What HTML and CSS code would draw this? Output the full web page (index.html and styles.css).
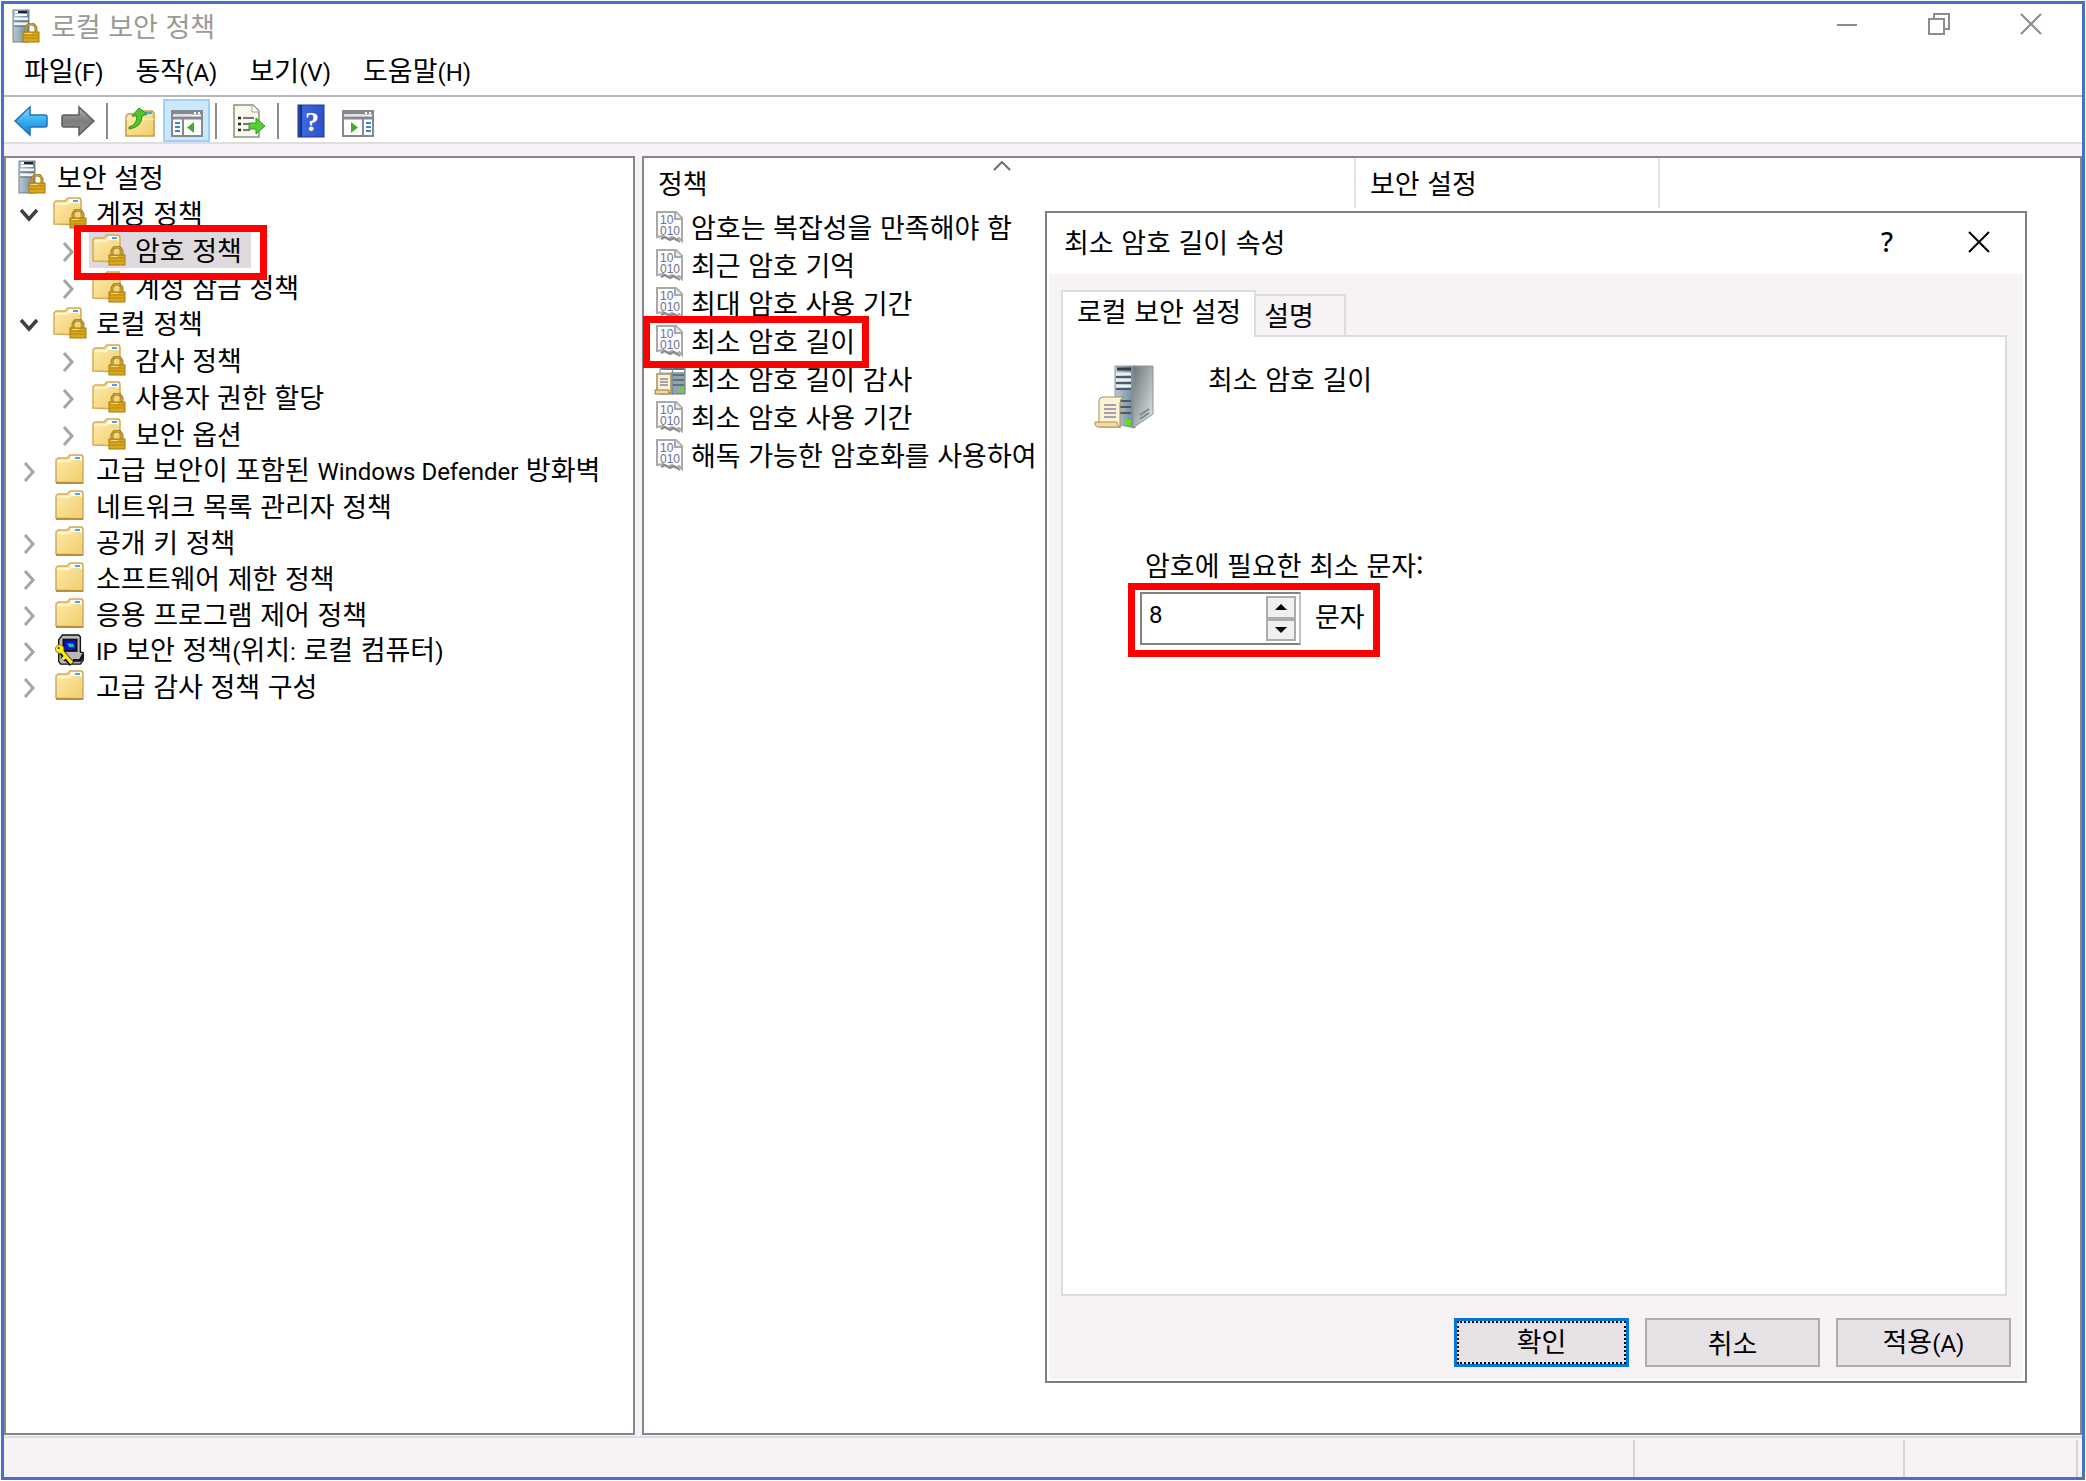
FILE: index.html
```html
<!DOCTYPE html>
<html lang="ko">
<head>
  <meta charset="UTF-8">
  <meta name="viewport" content="width=device-width, initial-scale=1.0">
  <title>로컬 보안 정책</title>
  <link rel="stylesheet" href="styles.css">
</head>
<body>

<!-- Iconos compartidos -->
<svg class="sprite" aria-hidden="true">
  <defs>
    <linearGradient id="gFolder" x1="0" y1="0" x2="1" y2="1">
      <stop offset="0" stop-color="#ffecae"/><stop offset="1" stop-color="#f0cd6c"/>
    </linearGradient>
    <linearGradient id="gServer" x1="0" y1="0" x2="1" y2="0">
      <stop offset="0" stop-color="#b9cbd4"/><stop offset="1" stop-color="#6f8592"/>
    </linearGradient>
    <linearGradient id="gSide" x1="0" y1="0" x2="1" y2="1">
      <stop offset="0" stop-color="#6d7579"/><stop offset="1" stop-color="#e2e8ea"/>
    </linearGradient>
    <linearGradient id="gBlue" x1="0" y1="0" x2="0" y2="1">
      <stop offset="0" stop-color="#8fdcff"/><stop offset="0.5" stop-color="#35aef2"/><stop offset="1" stop-color="#1583cf"/>
    </linearGradient>
    <linearGradient id="gGray" x1="0" y1="0" x2="0" y2="1">
      <stop offset="0" stop-color="#b5b5b5"/><stop offset="0.5" stop-color="#7d7d7d"/><stop offset="1" stop-color="#8f8f8f"/>
    </linearGradient>
    <linearGradient id="gHelp" x1="0" y1="0" x2="1" y2="0">
      <stop offset="0" stop-color="#1c3fae"/><stop offset="0.2" stop-color="#3f66dd"/><stop offset="1" stop-color="#2c50c8"/>
    </linearGradient>
  </defs>

  <symbol id="lock" viewBox="0 0 18 20">
    <path d="M4 10V6a5 5 0 0 1 10 0v4" fill="none" stroke="#a07a1e" stroke-width="3"/>
    <path d="M4 10V6a5 5 0 0 1 10 0v4" fill="none" stroke="#d8b453" stroke-width="1"/>
    <rect x="1" y="9" width="16" height="10" fill="#d9a81e" stroke="#a37a10"/>
    <path d="M2 12h14M2 15h14" stroke="#b5860f"/>
    <path d="M3 10.500h7" stroke="#f7d970"/>
  </symbol>

  <symbol id="folder" viewBox="0 0 34 32">
    <path d="M3 28V6l2-2h9l3-3h12l1 2v26z" fill="url(#gFolder)" stroke="#d6ab55" stroke-width="1.500"/>
    <path d="M4 7h12l3-3h9v3" fill="none" stroke="#fff5cf" stroke-width="2"/>
    <rect x="18" y="2" width="10" height="4" fill="#fff"/>
    <rect x="22" y="3" width="5" height="2" fill="#4ba3e8"/>
    <path d="M3 29h27" stroke="#b98f3c" stroke-width="2"/>
  </symbol>

  <symbol id="folder-lock" viewBox="0 0 34 32">
    <path d="M1 27V6l2-2h9l3-3h12l1 2v25z" fill="url(#gFolder)" stroke="#d6ab55" stroke-width="1.500"/>
    <path d="M2 7h12l3-3h9v3" fill="none" stroke="#fff5cf" stroke-width="2"/>
    <rect x="16" y="2" width="10" height="4" fill="#fff"/>
    <rect x="20" y="3" width="5" height="2" fill="#4ba3e8"/>
    <use href="#lock" x="16" y="12" width="18" height="20"/>
  </symbol>

  <symbol id="server-lock" viewBox="0 0 28 34">
    <rect x="1" y="1" width="16" height="32" fill="url(#gServer)" stroke="#71838d"/>
    <path d="M3 3h12M3 6h12" stroke="#fff" stroke-width="2"/>
    <path d="M6 3h9" stroke="#223" stroke-width="2"/>
    <path d="M2 10h14M2 15h14" stroke="#eef5f8" stroke-width="3"/>
    <path d="M2 12h14M2 17h14" stroke="#52636d"/>
    <use href="#lock" x="10" y="14" width="18" height="20"/>
  </symbol>

  <symbol id="policy" viewBox="0 0 28 32">
    <path d="M1 1h19l6 6v23l-3-3-3 2-4-3-4 2-5-3-6 1z" fill="#fdfdfd" stroke="#a9a9a9" stroke-width="2"/>
    <path d="M5 28l4-2 5 3 4-2 6 4" fill="none" stroke="#8a8a8a" stroke-width="2"/>
    <path d="M19 1v7h7" fill="#eee" stroke="#a9a9a9" stroke-width="2"/>
    <text x="4" y="13" class="bits">10</text>
    <text x="4" y="24" class="bits">010</text>
  </symbol>

  <symbol id="server-scroll" viewBox="0 0 60 64">
    <path d="M21 1h20v62l-20-4z" fill="url(#gServer)" stroke="#8d9ba3"/>
    <path d="M39 1h20v48L39 63z" fill="url(#gSide)" stroke="#8a9499"/>
    <path d="M23 4h14" stroke="#333c42" stroke-width="3"/>
    <path d="M22 9h15M22 15h15M22 21h15" stroke="#e7eff3" stroke-width="3"/>
    <path d="M22 12h15M22 18h15M22 24h15M22 36h15M22 42h15M22 48h15" stroke="#4c5a63" stroke-width="2"/>
    <path d="M46 50l9-6M46 54l9-6" stroke="#7f898e" stroke-width="2"/>
    <rect x="32" y="55" width="5" height="5" fill="#65dc1e"/>
    <path d="M5 36q0-4 4-4h21q-4 1-4 6v24H5z" fill="#fdf3d3" stroke="#a8915a"/>
    <path d="M1 57h22q0 5 4 5H5q-5 0-4-5z" fill="#f2dca0" stroke="#a8915a"/>
    <path d="M10 40h12M10 44h12M10 48h12M10 52h12" stroke="#8784a6" stroke-width="1.500"/>
  </symbol>

  <symbol id="server-mini" viewBox="0 0 32 32">
    <rect x="6" y="1" width="13" height="30" fill="#c3d3da" stroke="#7d8f99"/>
    <rect x="18" y="1" width="13" height="30" fill="#8fa4b0" stroke="#64767f"/>
    <path d="M7 4h11M7 8h11M19 4h11M19 8h11" stroke="#fff" stroke-width="2"/>
    <path d="M7 6h11M19 6h11M19 12h11M19 17h11M19 22h11" stroke="#50616b" stroke-width="1.500"/>
    <rect x="25" y="24" width="5" height="5" fill="#65dc1e"/>
    <path d="M3 11h14v19H3z" fill="#fdf3d3" stroke="#a8915a" stroke-width="1.500"/>
    <path d="M1 27h14v4H1z" fill="#f0d898" stroke="#8f7a45"/>
    <path d="M6 16h8M6 19h8M6 22h8" stroke="#8784a6" stroke-width="1.500"/>
  </symbol>

  <symbol id="ipsec" viewBox="0 0 34 34">
    <path d="M9 1h17l2 2v16l3 1v8l-3 4H7l-2-3V6z" fill="#b8b8b8" stroke="#111" stroke-width="1.500"/>
    <rect x="10" y="6" width="14" height="12" fill="#0a10d8" stroke="#111" stroke-width="2"/>
    <path d="M14 10h6l2 4h-6z" fill="#2bb4a8"/>
    <path d="M20 28h8l3-6" fill="none" stroke="#111" stroke-width="3"/>
    <path d="M8 19l11 13M12 24l-3 3" stroke="#111" stroke-width="6"/>
    <circle cx="6" cy="16" r="4.500" fill="#ffee11" stroke="#8a8000"/>
    <path d="M7 17l12 14M12 24l-3 3" stroke="#ffee11" stroke-width="3.500"/>
    <circle cx="5" cy="15" r="1.200" fill="#333"/>
  </symbol>

  <symbol id="open" viewBox="0 0 20 20">
    <path d="M2 5l8 9 8-9" fill="none" stroke="#404040" stroke-width="3.500"/>
  </symbol>
  <symbol id="closed" viewBox="0 0 20 20">
    <path d="M6 1l8 9-8 9" fill="none" stroke="#a6a6a6" stroke-width="3"/>
  </symbol>
</svg>

<main class="window">
  <header class="titlebar">
    <svg class="icon-server"><use href="#server-lock"/></svg>
    <h1>로컬 보안 정책</h1>
    <div class="controls">
      <button type="button" aria-label="최소화"><svg width="22" height="22" viewBox="0 0 22 22"><path d="M1 12h20"/></svg></button>
      <button type="button" aria-label="이전 크기로"><svg width="22" height="22" viewBox="0 0 22 22"><path d="M1 6h15v15H1zM6 6V1h15v15h-5"/></svg></button>
      <button type="button" aria-label="닫기"><svg width="22" height="22" viewBox="0 0 22 22"><path d="M1 1l20 20M21 1L1 21"/></svg></button>
    </div>
  </header>

  <nav class="menu">
    <a href="#">파일<span class="latin">(F)</span></a>
    <a href="#">동작<span class="latin">(A)</span></a>
    <a href="#">보기<span class="latin">(V)</span></a>
    <a href="#">도움말<span class="latin">(H)</span></a>
  </nav>

  <div class="toolbar">
    <button type="button" aria-label="뒤로">
      <svg width="34" height="34" viewBox="0 0 34 34"><path d="M1 17L16 3v8h15q2 0 2 2v8q0 2-2 2H16v8z" fill="url(#gBlue)" stroke="#2272b4" stroke-width="1.500"/></svg>
    </button>
    <button type="button" aria-label="앞으로">
      <svg width="34" height="34" viewBox="0 0 34 34"><path d="M33 17L18 3v8H3q-2 0-2 2v8q0 2 2 2h15v8z" fill="url(#gGray)" stroke="#5c5c5c" stroke-width="1.500"/></svg>
    </button>
    <span class="separator"></span>
    <button type="button" aria-label="한 수준 위로">
      <svg width="34" height="34" viewBox="0 0 34 34">
        <path d="M3 32V12l2-2h8l3-3h13l2 2v23z" fill="url(#gFolder)" stroke="#c99d45" stroke-width="1.500"/>
        <path d="M22 9h7" stroke="#4ba3e8" stroke-width="2"/>
        <path d="M3 15h28" stroke="#fff3c4"/>
        <path d="M6 23q8-2 8-11h-5l7-8 8 6-5 2q0 11-13 13z" fill="#4fc62c" stroke="#2f8f1c"/>
      </svg>
    </button>
    <button type="button" class="active" aria-label="콘솔 트리 표시/숨기기">
      <svg width="34" height="34" viewBox="0 0 34 34">
        <rect x="2" y="7" width="30" height="25" fill="#fff" stroke="#85898f" stroke-width="2"/>
        <path d="M2 9h30M2 14h30" stroke="#85898f" stroke-width="3"/>
        <path d="M4 11h18" stroke="#dfe3e8" stroke-width="2"/><path d="M24 9h2M28 9h2" stroke="#fff" stroke-width="2"/>
        <path d="M13 15v17" stroke="#85898f" stroke-width="2"/>
        <path d="M5 19h5M5 23h5M5 27h5" stroke="#3b83d0" stroke-width="2"/>
        <path d="M24 18v11l-7-5.500z" fill="#3fae29"/>
      </svg>
    </button>
    <span class="separator"></span>
    <button type="button" aria-label="목록 내보내기">
      <svg width="34" height="34" viewBox="0 0 34 34">
        <path d="M2 1h19l6 6v26H2z" fill="#fdf9ea" stroke="#8f8f88" stroke-width="1.500"/>
        <path d="M20 1v7h7" fill="#fff" stroke="#a0a09a"/>
        <path d="M6 14h3M6 20h3M6 26h3" stroke="#222" stroke-width="2.500"/>
        <path d="M11 14h11M11 20h7M11 26h7" stroke="#77728f" stroke-width="2"/>
        <path d="M17 19h7v-5l9 8-9 8v-5h-7z" fill="#55cf33" stroke="#349a1e"/>
      </svg>
    </button>
    <span class="separator"></span>
    <button type="button" aria-label="도움말">
      <svg width="34" height="34" viewBox="0 0 34 34">
        <rect x="4" y="1" width="26" height="32" fill="url(#gHelp)" stroke="#20389a"/>
        <path d="M7 1v32" stroke="#16308f" stroke-width="2"/>
        <text x="11" y="27" class="help-mark">?</text>
      </svg>
    </button>
    <button type="button" aria-label="작업 창 표시/숨기기">
      <svg width="34" height="34" viewBox="0 0 34 34">
        <rect x="2" y="7" width="30" height="25" fill="#fff" stroke="#85898f" stroke-width="2"/>
        <path d="M2 9h30M2 14h30" stroke="#85898f" stroke-width="3"/>
        <path d="M4 11h18" stroke="#dfe3e8" stroke-width="2"/><path d="M24 9h2M28 9h2" stroke="#fff" stroke-width="2"/>
        <path d="M22 15v17" stroke="#85898f" stroke-width="2"/>
        <path d="M25 19h5M25 23h5M25 27h5" stroke="#3b83d0" stroke-width="2"/>
        <path d="M10 18v11l7-5.500z" fill="#3fae29"/>
      </svg>
    </button>
  </div>

  <div class="panes">
    <!-- Árbol de directivas -->
    <nav class="pane tree">
      <a class="root" href="#"><svg class="icon-server"><use href="#server-lock"/></svg>보안 설정</a>
      <ul>
        <li>
          <div class="row"><svg class="twisty"><use href="#open"/></svg><a href="#"><svg class="icon"><use href="#folder-lock"/></svg>계정 정책</a></div>
          <ul>
            <li class="row"><svg class="twisty"><use href="#closed"/></svg><a class="selected" href="#"><svg class="icon"><use href="#folder-lock"/></svg>암호 정책<span class="mark mark-tree"></span></a></li>
            <li class="row"><svg class="twisty"><use href="#closed"/></svg><a href="#"><svg class="icon"><use href="#folder-lock"/></svg>계정 잠금 정책</a></li>
          </ul>
        </li>
        <li>
          <div class="row"><svg class="twisty"><use href="#open"/></svg><a href="#"><svg class="icon"><use href="#folder-lock"/></svg>로컬 정책</a></div>
          <ul>
            <li class="row"><svg class="twisty"><use href="#closed"/></svg><a href="#"><svg class="icon"><use href="#folder-lock"/></svg>감사 정책</a></li>
            <li class="row"><svg class="twisty"><use href="#closed"/></svg><a href="#"><svg class="icon"><use href="#folder-lock"/></svg>사용자 권한 할당</a></li>
            <li class="row"><svg class="twisty"><use href="#closed"/></svg><a href="#"><svg class="icon"><use href="#folder-lock"/></svg>보안 옵션</a></li>
          </ul>
        </li>
        <li class="row"><svg class="twisty"><use href="#closed"/></svg><a href="#"><svg class="icon"><use href="#folder"/></svg><span>고급 보안이 포함된 <span class="latin">Windows Defender</span> 방화벽</span></a></li>
        <li class="row"><svg class="twisty"></svg><a href="#"><svg class="icon"><use href="#folder"/></svg>네트워크 목록 관리자 정책</a></li>
        <li class="row"><svg class="twisty"><use href="#closed"/></svg><a href="#"><svg class="icon"><use href="#folder"/></svg>공개 키 정책</a></li>
        <li class="row"><svg class="twisty"><use href="#closed"/></svg><a href="#"><svg class="icon"><use href="#folder"/></svg>소프트웨어 제한 정책</a></li>
        <li class="row"><svg class="twisty"><use href="#closed"/></svg><a href="#"><svg class="icon"><use href="#folder"/></svg>응용 프로그램 제어 정책</a></li>
        <li class="row"><svg class="twisty"><use href="#closed"/></svg><a href="#"><svg class="icon"><use href="#ipsec"/></svg><span><span class="latin">IP</span> 보안 정책<span class="latin">(</span>위치<span class="latin">:</span> 로컬 컴퓨터<span class="latin">)</span></span></a></li>
        <li class="row"><svg class="twisty"><use href="#closed"/></svg><a href="#"><svg class="icon"><use href="#folder"/></svg>고급 감사 정책 구성</a></li>
      </ul>
    </nav>

    <!-- Lista de directivas -->
    <section class="pane policies">
      <table>
        <thead>
          <tr>
            <th class="col-policy">정책<svg class="sort" width="18" height="10" viewBox="0 0 18 10"><path d="M1 9l8-8 8 8" fill="none" stroke="#6d6d6d" stroke-width="2"/></svg></th>
            <th class="col-setting">보안 설정</th>
            <th></th>
          </tr>
        </thead>
        <tbody>
          <tr><td><a href="#"><svg class="icon"><use href="#policy"/></svg>암호는 복잡성을 만족해야 함</a></td><td></td><td></td></tr>
          <tr><td><a href="#"><svg class="icon"><use href="#policy"/></svg>최근 암호 기억</a></td><td></td><td></td></tr>
          <tr><td><a href="#"><svg class="icon"><use href="#policy"/></svg>최대 암호 사용 기간</a></td><td></td><td></td></tr>
          <tr><td><a href="#"><svg class="icon"><use href="#policy"/></svg>최소 암호 길이<span class="mark mark-list"></span></a></td><td></td><td></td></tr>
          <tr><td><a href="#"><svg class="icon"><use href="#server-mini"/></svg>최소 암호 길이 감사</a></td><td></td><td></td></tr>
          <tr><td><a href="#"><svg class="icon"><use href="#policy"/></svg>최소 암호 사용 기간</a></td><td></td><td></td></tr>
          <tr><td><a href="#"><svg class="icon"><use href="#policy"/></svg>해독 가능한 암호화를 사용하여 암호 저장</a></td><td></td><td></td></tr>
        </tbody>
      </table>

      <form class="dialog" role="dialog" aria-labelledby="dialogTitle">
        <header class="dialog-title">
          <h2 id="dialogTitle">최소 암호 길이 속성</h2>
          <button type="button" class="help" aria-label="도움말">?</button>
          <button type="button" aria-label="닫기"><svg width="22" height="22" viewBox="0 0 22 22"><path d="M1 1l20 20M21 1L1 21"/></svg></button>
        </header>
        <div class="dialog-body">
          <div class="tabs">
            <button type="button" class="tab current">로컬 보안 설정</button>
            <button type="button" class="tab">설명</button>
          </div>
          <div class="panel">
            <div class="policy-name">
              <svg class="icon-large"><use href="#server-scroll"/></svg>
              <span>최소 암호 길이</span>
            </div>
            <label for="minLength">암호에 필요한 최소 문자:</label>
            <div class="field">
              <div class="spinner">
                <input type="text" id="minLength" name="minLength" value="8">
                <div class="arrows">
                  <button type="button" aria-label="늘리기"><svg width="12" height="6" viewBox="0 0 12 6"><path d="M0 6l6-6 6 6z"/></svg></button>
                  <button type="button" aria-label="줄이기"><svg width="12" height="6" viewBox="0 0 12 6"><path d="M0 0l6 6 6-6z"/></svg></button>
                </div>
              </div>
              <span class="unit">문자</span>
            </div>
          </div>
          <div class="actions">
            <button type="submit" class="default"><span>확인</span></button>
            <button type="button">취소</button>
            <button type="button">적용<span class="latin">(A)</span></button>
          </div>
        </div>
      </form>
    </section>
  </div>

  <footer class="statusbar"><span></span><span></span><span></span></footer>
</main>

</body>
</html>
```
FILE: styles.css
```css
* {
  box-sizing: border-box;
}
body {
  margin: 0;
  padding: 1px;
  height: 100vh;
  background: #fff;
  color: #000;
  font-family: "Noto Sans CJK KR", sans-serif;
  font-size: 27px;
  line-height: 36px;
}
button,
input {
  font: inherit;
  color: inherit;
  padding: 0;
}
button {
  border: none;
  background: none;
}
a {
  color: inherit;
  text-decoration: none;
}
ul {
  list-style: none;
  margin: 0;
  padding: 0;
}
svg {
  display: block;
  flex: none;
}
.sprite {
  position: absolute;
  width: 0;
  height: 0;
  visibility: hidden;
}
.latin {
  font-family: Roboto, sans-serif;
  font-size: 24px;
}
.bits {
  font-family: "Liberation Sans", sans-serif;
  font-size: 12px;
  fill: #6f6f95;
}
.help-mark {
  font-family: "Liberation Serif", serif;
  font-size: 28px;
  font-weight: bold;
  fill: #fff;
}
.window {
  display: flex;
  flex-direction: column;
  height: 100%;
  border: 3px solid #4472c4;
  background: #fff;
}

/* Barra de título */
.titlebar {
  display: flex;
  align-items: center;
  height: 44px;
  padding-left: 8px;
}
.titlebar h1 {
  flex: 1;
  margin: 0 0 0 11px;
  font-size: 27px;
  font-weight: normal;
  color: #999;
}
.icon-server {
  width: 28px;
  height: 34px;
}
.controls {
  display: flex;
  padding: 0 5px 4px 0;
}
.controls button {
  display: flex;
  justify-content: center;
  width: 92px;
}
.controls path {
  fill: none;
  stroke: #8c8c8c;
  stroke-width: 2;
}

/* Menú y herramientas */
.menu {
  display: flex;
  gap: 32px;
  height: 49px;
  padding: 4px 20px;
  border-bottom: 2px solid #b8b8b8;
}
.toolbar {
  display: flex;
  align-items: center;
  height: 47px;
  padding: 2px 0 0 3px;
  border-bottom: 2px solid #dedede;
}
.toolbar button {
  display: flex;
  align-items: center;
  justify-content: center;
  width: 47px;
  height: 43px;
}
.toolbar .active {
  background: #cce8ff;
  border: 2px solid #99d1ff;
}
.separator {
  width: 2px;
  height: 36px;
  margin: 0 8px 0 5px;
  background: #8c8c8c;
}

/* Paneles */
.panes {
  flex: 1;
  display: grid;
  grid-template-columns: 631px 1fr;
  gap: 7px;
  min-height: 0;
  padding: 12px 0 1px;
  background: #f6f2f6;
}
.pane {
  border: 2px solid #828790;
  background: #fff;
}
.tree {
  padding-left: 10px;
}
.tree a {
  display: flex;
  align-items: center;
  gap: 9px;
  height: 36px;
  padding: 0 9px 0 3px;
  white-space: nowrap;
}
.tree .root {
  gap: 11px;
  height: 37px;
  padding-left: 2px;
}
.row {
  display: flex;
  align-items: center;
  gap: 8px;
  height: 36px;
}
.tree ul ul {
  padding-left: 39px;
}
.tree ul ul .row {
  height: 37px;
}
.twisty {
  width: 26px;
  height: 20px;
  margin-top: 4px;
}
.icon {
  width: 34px;
  height: 32px;
}
.tree .selected {
  position: relative;
  background: #dedade;
}

/* Recuadros rojos */
.mark {
  position: absolute;
  z-index: 1;
  border: 7px solid #f00;
  pointer-events: none;
}
.mark-tree {
  inset: -7px -16px -12px -15px;
}
.mark-list {
  inset: -6px -14px -8px -10px;
}

/* Tabla */
.policies {
  position: relative;
}
table {
  width: 100%;
  table-layout: fixed;
  border-collapse: collapse;
}
th {
  position: relative;
  height: 50px;
  padding: 0 14px;
  border-right: 2px solid #e5e5e5;
  font-weight: normal;
  text-align: left;
}
th:last-child {
  border: none;
}
.col-policy {
  width: 711px;
}
.col-setting {
  width: 304px;
}
.sort {
  position: absolute;
  top: 3px;
  left: 349px;
}
td {
  height: 38px;
  padding: 0 0 0 9px;
}
td a {
  position: relative;
  display: flex;
  align-items: center;
  gap: 4px;
  width: max-content;
  height: 38px;
}

/* Cuadro de propiedades */
.dialog {
  position: absolute;
  top: 53px;
  right: 53px;
  bottom: 50px;
  left: 401px;
  display: flex;
  flex-direction: column;
  border: 2px solid #7f7f7f;
  background: #fff;
}
.dialog-title {
  display: flex;
  align-items: center;
  height: 61px;
  padding: 0 0 4px 17px;
}
.dialog-title h2 {
  flex: 1;
  margin: 0;
  font-size: 27px;
  font-weight: normal;
}
.dialog-title button {
  display: flex;
  justify-content: center;
  width: 92px;
}
.dialog-title .help {
  font-family: "Noto Sans", sans-serif;
  font-weight: 500;
}
.dialog-title path {
  fill: none;
  stroke: #000;
  stroke-width: 2;
}
.dialog-body {
  flex: 1;
  display: flex;
  flex-direction: column;
  margin: 0 2px 2px;
  padding: 16px 12px 12px;
  background: #f6f2f6;
}
.tabs {
  display: flex;
  align-items: flex-end;
}
.tab {
  height: 41px;
  padding: 0 30px 2px 8px;
  border: 2px solid #dcdcdc;
  border-left: none;
  border-bottom: none;
}
.tab.current {
  z-index: 1;
  height: 47px;
  margin-bottom: -2px;
  padding: 0 13px 8px 14px;
  border-left: 2px solid #dcdcdc;
  background: #fff;
}
.panel {
  flex: 1;
  margin-right: 4px;
  padding: 28px 31px;
  border: 2px solid #dcdcdc;
  background: #fff;
}
.policy-name {
  display: flex;
  gap: 54px;
  height: 182px;
  line-height: 28px;
}
.icon-large {
  width: 60px;
  height: 64px;
}
.panel label {
  display: block;
  padding-left: 51px;
}
.field {
  display: flex;
  align-items: center;
  gap: 14px;
  width: max-content;
  margin-left: 34px;
  padding: 2px 8px 5px 5px;
  border: 7px solid #f00;
}
.unit {
  padding-bottom: 5px;
}
.spinner {
  display: flex;
  border: 2px solid #828282;
  border-right-color: #c4bccb;
}
.spinner input {
  width: 121px;
  height: 49px;
  padding: 0 7px 8px;
  border: none;
  outline: none;
  font-family: Roboto, sans-serif;
  font-size: 24px;
}
.arrows {
  display: flex;
  flex-direction: column;
  padding: 2px 3px;
}
.arrows button {
  display: flex;
  flex: 1;
  align-items: center;
  justify-content: center;
  width: 30px;
  border: 2px solid #acacac;
  background: #f0f0f0;
}
.actions {
  display: flex;
  justify-content: flex-end;
  gap: 16px;
  padding-top: 22px;
}
.actions button {
  width: 175px;
  height: 49px;
  border: 2px solid #adadad;
  background: #e7e2e6;
}
.actions .default {
  border: 3px solid #0078d7;
}
.default span {
  display: block;
  height: 43px;
  border: 2px dotted #000;
}

/* Barra de estado */
.statusbar {
  display: flex;
  justify-content: flex-end;
  height: 41px;
  padding: 2px 4px 0 0;
  border-top: 2px solid #dedede;
  background: #f6f2f6;
}
.statusbar span {
  border-right: 2px solid #d5d5d8;
}
.statusbar span:nth-child(2) {
  width: 270px;
}
.statusbar span:nth-child(3) {
  width: 173px;
}
```
